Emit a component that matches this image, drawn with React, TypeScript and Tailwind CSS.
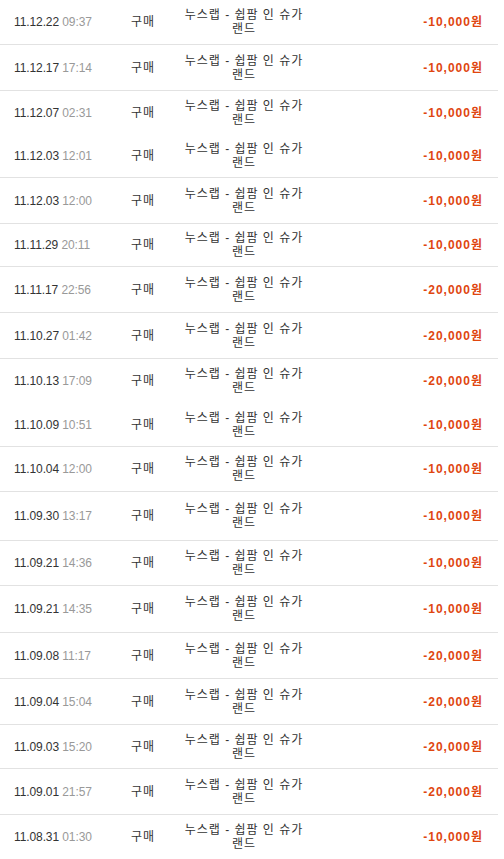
type Row = {
  date: string;
  time: string;
  amount: string;
  h: string;
  line: boolean;
};

const rows: Row[] = [
  { date: "11.12.22", time: "09:37", amount: "-10,000원", h: "h-[45px]", line: true },
  { date: "11.12.17", time: "17:14", amount: "-10,000원", h: "h-[46px]", line: true },
  { date: "11.12.07", time: "02:31", amount: "-10,000원", h: "h-[44px]", line: false },
  { date: "11.12.03", time: "12:01", amount: "-10,000원", h: "h-[43px]", line: true },
  { date: "11.12.03", time: "12:00", amount: "-10,000원", h: "h-[46px]", line: true },
  { date: "11.11.29", time: "20:11", amount: "-10,000원", h: "h-[43px]", line: true },
  { date: "11.11.17", time: "22:56", amount: "-20,000원", h: "h-[46px]", line: true },
  { date: "11.10.27", time: "01:42", amount: "-20,000원", h: "h-[46px]", line: true },
  { date: "11.10.13", time: "17:09", amount: "-20,000원", h: "h-[44px]", line: false },
  { date: "11.10.09", time: "10:51", amount: "-10,000원", h: "h-[44px]", line: true },
  { date: "11.10.04", time: "12:00", amount: "-10,000원", h: "h-[45px]", line: true },
  { date: "11.09.30", time: "13:17", amount: "-10,000원", h: "h-[49px]", line: true },
  { date: "11.09.21", time: "14:36", amount: "-10,000원", h: "h-[45px]", line: true },
  { date: "11.09.21", time: "14:35", amount: "-10,000원", h: "h-[47px]", line: true },
  { date: "11.09.08", time: "11:17", amount: "-20,000원", h: "h-[46px]", line: true },
  { date: "11.09.04", time: "15:04", amount: "-20,000원", h: "h-[46px]", line: true },
  { date: "11.09.03", time: "15:20", amount: "-20,000원", h: "h-[44px]", line: true },
  { date: "11.09.01", time: "21:57", amount: "-20,000원", h: "h-[46px]", line: true },
  { date: "11.08.31", time: "01:30", amount: "-10,000원", h: "h-[44px]", line: false },
];

export default function App() {
  return (
    <div className="w-[504px] bg-white font-['Liberation_Sans','Noto_Sans_CJK_KR',sans-serif] text-[12px]">
      <div className="w-[498px]">
        {rows.map((r, i) => (
          <div
            key={i}
            className={`flex items-center ${r.h} ${r.line ? "border-b border-[#e2e2e2]" : ""}`}
          >
            <div className="w-[118px] pl-[14px] tracking-[-0.1px]">
              <span className="text-[#333]">{r.date}</span>{" "}
              <span className="text-[#999]">{r.time}</span>
            </div>
            <div className="w-[50px] text-center tracking-[1px] text-[#333]">구매</div>
            <div className="w-[152px] text-center leading-[14px] tracking-[1px] text-[#333]">
              누스랩 - 쉽팜 인 슈가
              <br />
              랜드
            </div>
            <div className="flex-1 pr-[15px] text-right font-bold tracking-[1px] text-[#e0460f]">
              {r.amount}
            </div>
          </div>
        ))}
      </div>
    </div>
  );
}
